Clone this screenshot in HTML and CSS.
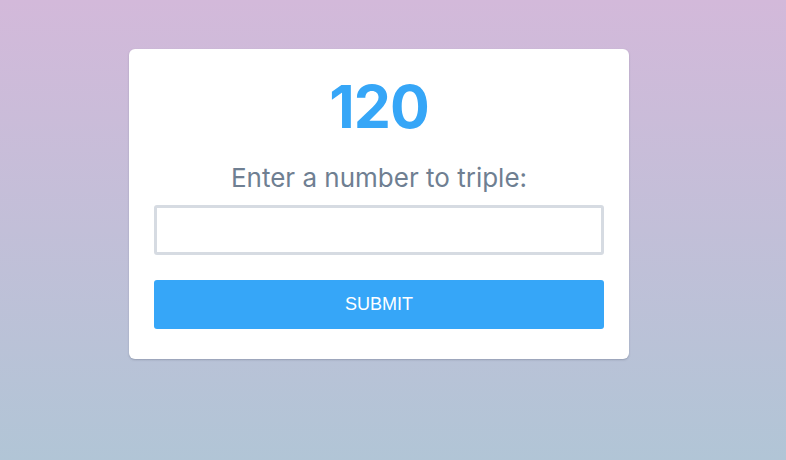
FILE: index.html
```html
<!DOCTYPE html>
<html>
<head>
<meta charset="utf-8">
<link rel="stylesheet" href="styles.css">
</head>
<body>
<div class="page">
  <div class="card">
    <div class="result">120</div>
    <label class="label" for="num">Enter a number to triple:</label>
    <input class="field" id="num" type="text">
    <button class="submit">SUBMIT</button>
  </div>
</div>
</body>
</html>
```

FILE: styles.css
```css
html, body {
  margin: 0;
  padding: 0;
  height: 100%;
}
body {
  background: linear-gradient(to bottom, #d3b9da 0%, #b1c5d6 100%);
  font-family: "Inter", "Noto Sans", sans-serif;
}
.page {
  padding-top: 49px;
  padding-left: 129px;
}
.card {
  width: 500px;
  box-sizing: border-box;
  background: #fff;
  border-radius: 6px;
  box-shadow: 0 1px 2px rgba(80, 90, 110, 0.35);
  padding: 22px 25px 30px;
  display: flex;
  flex-direction: column;
}
.result {
  text-align: center;
  font-size: 59px;
  font-weight: 700;
  color: #36a6f7;
  line-height: 72px;
  letter-spacing: -1px;
}
.label {
  text-align: center;
  font-size: 26px;
  color: #6f7f92;
  line-height: 32px;
  margin-top: 19px;
  margin-bottom: 11px;
}
.field {
  height: 50px;
  box-sizing: border-box;
  border: 3px solid #d6dbe2;
  border-radius: 3px;
  outline: none;
  padding: 0 10px;
  font-size: 18px;
}
.submit {
  margin-top: 25px;
  height: 49px;
  border: none;
  border-radius: 3px;
  background: #36a6f8;
  color: #fff;
  font-family: "Liberation Sans", Arial, sans-serif;
  font-size: 18px;
}
```
